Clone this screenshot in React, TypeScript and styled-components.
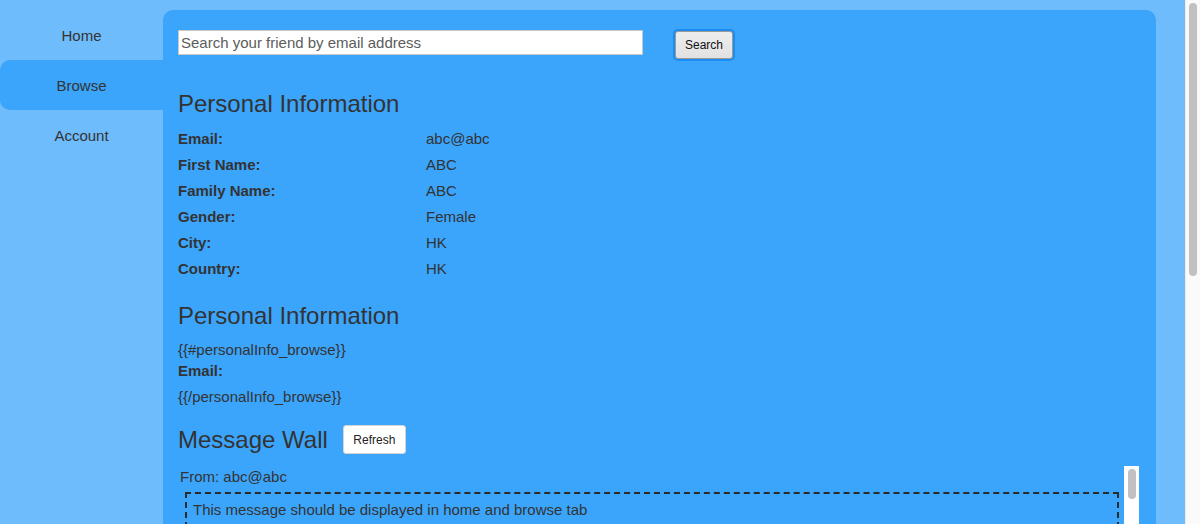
import React from "react";
import styled, { createGlobalStyle } from "styled-components";

const Global = createGlobalStyle`
  html, body { height: 100%; }
  body {
    margin: 0;
    overflow: hidden;
    background: #6fbcfc;
    font-family: "Liberation Sans", Arial, sans-serif;
    color: #333;
  }
`;

const Viewport = styled.div`
  display: flex;
  height: 100vh;
  overflow: hidden;
`;

const Page = styled.div`
  flex: 1;
  min-width: 0;
  overflow: hidden;
`;

const ScrollTrack = styled.div<{ $bg: string; $edge?: boolean }>`
  flex: none;
  width: 15px;
  box-sizing: border-box;
  background: ${(p) => p.$bg};
  border-left: ${(p) => (p.$edge ? "1px solid #ededed" : "none")};
  padding: 3px 3px 0 ${(p) => (p.$edge ? "3px" : "4px")};
`;

const ScrollThumb = styled.div<{ $h: number }>`
  width: 8px;
  height: ${(p) => p.$h}px;
  border-radius: 4px;
  background: #c1c1c1;
`;

const Layout = styled.div`
  display: flex;
  align-items: flex-start;
  padding-top: 10px;
`;

const Sidebar = styled.nav`
  width: 163px;
  flex: none;
  display: flex;
  flex-direction: column;
`;

const NavItem = styled.div<{ $active?: boolean }>`
  height: 50px;
  display: flex;
  align-items: center;
  justify-content: center;
  font-size: 15px;
  color: #333;
  border-radius: 10px 0 0 10px;
  background: ${(p) => (p.$active ? "#3ba5fb" : "transparent")};
`;

const Panel = styled.main`
  flex: 1;
  margin-right: 29px;
  background: #3ba5fb;
  border-radius: 10px 10px 0 0;
  padding: 20px 15px 20px 15px;
  min-height: 955px;
  box-sizing: border-box;
`;

const SearchRow = styled.div`
  display: flex;
  align-items: flex-start;
`;

const SearchInput = styled.input`
  width: 465px;
  height: 25px;
  box-sizing: border-box;
  border: 1px solid #c8c8c8;
  background: #fff;
  padding: 0 2px;
  font-family: "Liberation Sans", Arial, sans-serif;
  font-size: 15px;
  color: #555;
  outline: none;
  &::placeholder { color: #5c5c5c; }
`;

const SearchButton = styled.button`
  margin-left: 32px;
  margin-top: 1px;
  width: 58px;
  height: 28px;
  border: 1px solid #9a9a9a;
  border-radius: 3px;
  background: linear-gradient(#ededed, #e2e2e2);
  box-shadow: 0 0 0 2px #1d8cf0;
  font-family: "Liberation Sans", Arial, sans-serif;
  font-size: 12px;
  color: #111;
  padding: 0;
`;

const Heading = styled.h2<{ $mt: number }>`
  margin: ${(p) => p.$mt}px 0 0 0;
  font-size: 24px;
  line-height: 26px;
  font-weight: normal;
  color: #333;
`;

const InfoTable = styled.div`
  margin-top: 8px;
  display: grid;
  grid-template-columns: 248px 1fr;
  grid-auto-rows: 26px;
  align-items: center;
  font-size: 15px;
`;

const Label = styled.div`
  font-weight: bold;
`;

const Value = styled.div``;

const TemplateLine = styled.div<{ $mt: number }>`
  margin-top: ${(p) => p.$mt}px;
  font-size: 15px;
  line-height: 18px;
`;

const TemplateLabel = styled.div`
  font-size: 15px;
  font-weight: bold;
  line-height: 24px;
`;

const WallHeader = styled.div`
  display: flex;
  align-items: center;
  margin-top: 19px;
`;

const RefreshButton = styled.button`
  margin-left: 15px;
  width: 63px;
  height: 29px;
  background: #fff;
  border: 1px solid #d4d4d4;
  border-radius: 3px;
  font-family: "Liberation Sans", Arial, sans-serif;
  font-size: 12px;
  color: #222;
  padding: 0;
`;

const Wall = styled.div`
  margin-top: 12px;
  margin-right: 2px;
  height: 470px;
  display: flex;
`;

const WallList = styled.div`
  flex: 1;
  min-width: 0;
  overflow: hidden;
  padding: 2px 0 0 2px;
  font-size: 15px;
`;

const Message = styled.div`
  margin-bottom: 14px;
`;

const From = styled.div`
  line-height: 18px;
`;

const MessageBox = styled.div`
  margin: 6px 5px 0 5px;
  border: 2px dashed #2b2b2b;
  padding: 7px 6px;
  line-height: 18px;
`;

const rows: [string, string][] = [
  ["Email:", "abc@abc"],
  ["First Name:", "ABC"],
  ["Family Name:", "ABC"],
  ["Gender:", "Female"],
  ["City:", "HK"],
  ["Country:", "HK"],
];

const messages = Array.from({ length: 8 }, () => ({
  from: "abc@abc",
  text: "This message should be displayed in home and browse tab",
}));

export default function App() {
  return (
    <>
      <Global />
      <Viewport>
        <Page>
          <Layout>
            <Sidebar>
              <NavItem>Home</NavItem>
              <NavItem $active>Browse</NavItem>
              <NavItem>Account</NavItem>
            </Sidebar>
            <Panel>
              <SearchRow>
                <SearchInput placeholder="Search your friend by email address" />
                <SearchButton>Search</SearchButton>
              </SearchRow>

              <Heading $mt={32}>Personal Information</Heading>
              <InfoTable>
                {rows.map(([l, v]) => (
                  <React.Fragment key={l}>
                    <Label>{l}</Label>
                    <Value>{v}</Value>
                  </React.Fragment>
                ))}
              </InfoTable>

              <Heading $mt={22}>Personal Information</Heading>
              <TemplateLine $mt={12}>{"{{#personalInfo_browse}}"}</TemplateLine>
              <TemplateLabel>Email:</TemplateLabel>
              <TemplateLine $mt={5}>{"{{/personalInfo_browse}}"}</TemplateLine>

              <WallHeader>
                <Heading $mt={0}>Message Wall</Heading>
                <RefreshButton>Refresh</RefreshButton>
              </WallHeader>
              <Wall>
                <WallList>
                  {messages.map((m, i) => (
                    <Message key={i}>
                      <From>From: {m.from}</From>
                      <MessageBox>{m.text}</MessageBox>
                    </Message>
                  ))}
                </WallList>
                <ScrollTrack $bg="#ffffff">
                  <ScrollThumb $h={30} />
                </ScrollTrack>
              </Wall>
            </Panel>
          </Layout>
        </Page>
        <ScrollTrack $bg="#fafafa" $edge>
          <ScrollThumb $h={273} />
        </ScrollTrack>
      </Viewport>
    </>
  );
}
